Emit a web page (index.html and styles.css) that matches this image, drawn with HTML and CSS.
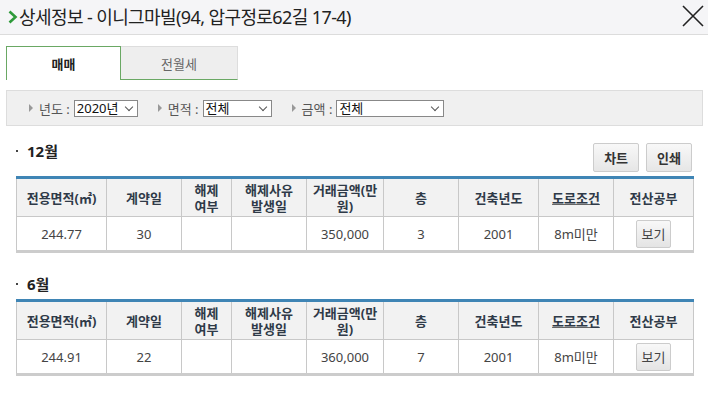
FILE: index.html
```html
<!DOCTYPE html>
<html>
<head>
    <title>상세정보</title>
    <link rel="stylesheet" href="styles.css">
</head>
<body>
    <div class="header">
        <h1 class="title">
            <svg class="chev" width="10" height="14" viewBox="0 0 10 14"><path d="M1.5 1.5 L7.5 7 L1.5 12.5" fill="none" stroke="#2e9a3a" stroke-width="2.6"/></svg>상세정보 - 이니그마빌(94, 압구정로62길 17-4)
        </h1>
        <svg class="close" width="24" height="24" viewBox="0 0 24 24"><path d="M2 2 L22 22 M22 2 L2 22" stroke="#222" stroke-width="1.6"/></svg>
    </div>

    <div class="content">
        <div class="tabs">
            <div class="tab active">매매</div>
            <div class="tab">전월세</div>
        </div>

        <div class="filter">
            <span class="flabel">년도 :</span>
            <span class="select w-year">2020년<i class="caret"></i></span>
            <span class="flabel">면적 :</span>
            <span class="select w-area">전체<i class="caret"></i></span>
            <span class="flabel">금액 :</span>
            <span class="select w-price">전체<i class="caret"></i></span>
        </div>

        <div class="section">
            <div class="section-head">
                <h2 class="month">12월</h2>
                <div class="tools">
                    <button class="btn">차트</button>
                    <button class="btn">인쇄</button>
                </div>
            </div>
            <table class="deal">
                <colgroup>
                    <col style="width:90px"><col style="width:75px"><col style="width:50px"><col style="width:75px"><col style="width:77px"><col style="width:75px"><col style="width:80px"><col style="width:75px"><col style="width:80px">
                </colgroup>
                <tr>
                    <th>전용면적(㎡)</th><th>계약일</th><th><span class="ln">해제</span><span class="ln">여부</span></th><th><span class="ln">해제사유</span><span class="ln">발생일</span></th><th><span class="ln">거래금액(만</span><span class="ln">원)</span></th><th>층</th><th>건축년도</th><th><u>도로조건</u></th><th>전산공부</th>
                </tr>
                <tr>
                    <td>244.77</td><td>30</td><td></td><td></td><td>350,000</td><td>3</td><td>2001</td><td>8m미만</td><td><button class="view">보기</button></td>
                </tr>
            </table>
        </div>

        <div class="section">
            <div class="section-head short">
                <h2 class="month">6월</h2>
            </div>
            <table class="deal">
                <colgroup>
                    <col style="width:90px"><col style="width:75px"><col style="width:50px"><col style="width:75px"><col style="width:77px"><col style="width:75px"><col style="width:80px"><col style="width:75px"><col style="width:80px">
                </colgroup>
                <tr>
                    <th>전용면적(㎡)</th><th>계약일</th><th><span class="ln">해제</span><span class="ln">여부</span></th><th><span class="ln">해제사유</span><span class="ln">발생일</span></th><th><span class="ln">거래금액(만</span><span class="ln">원)</span></th><th>층</th><th>건축년도</th><th><u>도로조건</u></th><th>전산공부</th>
                </tr>
                <tr>
                    <td>244.91</td><td>22</td><td></td><td></td><td>360,000</td><td>7</td><td>2001</td><td>8m미만</td><td><button class="view">보기</button></td>
                </tr>
            </table>
        </div>
    </div>
</body>
</html>
```

FILE: styles.css
```css
body {
    margin: 0;
    font-family: "Noto Sans", "Noto Sans CJK KR", sans-serif;
    color: #333;
    background: #fff;
}

.header {
    height: 34px;
    background: #f5f5f7;
    border-bottom: 1px solid #dcdcdc;
    display: flex;
    align-items: center;
    justify-content: space-between;
    padding: 0 3px 0 8px;
}

.title {
    margin: 0;
    font-size: 18px;
    font-weight: normal;
    color: #222;
    display: flex;
    align-items: center;
    line-height: 1;
    letter-spacing: -0.6px;
}

.chev {
    margin-right: 1px;
}

.close {
    margin-top: -2px;
}

.content {
    padding: 11px 5px 0 6px;
}

.tabs {
    display: flex;
    height: 34px;
}

.tab {
    box-sizing: border-box;
    width: 117px;
    display: flex;
    align-items: center;
    justify-content: center;
    font-size: 13px;
    color: #666;
    background: #eee;
    border-top: 1px solid #ddd;
    border-right: 1px solid #ddd;
    border-bottom: 1px solid #6aa864;
}

.tab.active {
    width: 115px;
    background: #fff;
    color: #222;
    font-weight: bold;
    border: 1px solid #6aa864;
    border-bottom: none;
}

.filter {
    margin-top: 10px;
    height: 36px;
    box-sizing: border-box;
    background: #f0f0f0;
    border: 1px solid #ddd;
    display: flex;
    align-items: center;
    padding-left: 20px;
    font-size: 13px;
    color: #555;
}

.flabel {
    position: relative;
    padding-left: 12px;
    margin-right: 4px;
}

.flabel::before {
    content: "";
    position: absolute;
    left: 2px;
    top: 5px;
    border-left: 4px solid #999;
    border-top: 4px solid transparent;
    border-bottom: 4px solid transparent;
}

.select {
    box-sizing: border-box;
    height: 17px;
    border: 1px solid #888;
    background: #fff;
    color: #111;
    font-size: 13px;
    line-height: 15px;
    padding-left: 2px;
    position: relative;
    margin-right: 18px;
}

.caret {
    position: absolute;
    right: 5px;
    top: 3px;
    width: 5px;
    height: 5px;
    border-right: 1px solid #555;
    border-bottom: 1px solid #555;
    transform: rotate(45deg);
}

.w-year { width: 64px; }
.w-area { width: 69px; }
.w-price { width: 108px; }

.section {
    margin-top: 16px;
}

.section + .section {
    margin-top: 22px;
}

.section-head {
    display: flex;
    align-items: center;
    justify-content: space-between;
    height: 30px;
    margin-bottom: 4px;
    margin-right: 11px;
}

.section-head.short {
    height: 20px;
    margin-bottom: 4px;
}

.month {
    margin: 0;
    font-size: 15px;
    font-weight: bold;
    color: #222;
    position: relative;
    padding-left: 21px;
    align-self: flex-start;
    line-height: 18px;
}

.month::before {
    content: "";
    position: absolute;
    left: 10px;
    top: 8px;
    width: 2px;
    height: 2px;
    background: #444;
}

.tools {
    display: flex;
    gap: 7px;
}

.btn {
    height: 29px;
    padding: 0 10px;
    font-family: inherit;
    font-size: 13px;
    font-weight: bold;
    color: #333;
    background: linear-gradient(#f8f8f8, #e6e6e6);
    border: 1px solid #ccc;
    border-radius: 2px;
}

.deal {
    margin-left: 10px;
    width: 678px;
    border-collapse: collapse;
    table-layout: fixed;
    border-top: 3px solid #3f85b5;
    border-bottom: 3px solid #ccc;
    font-size: 13px;
}

.deal th,
.deal td {
    border: 1px solid #c8c8c8;
    text-align: center;
    padding: 0;
}

.deal th {
    height: 37px;
    background: #f2f2f2;
    color: #2f3a48;
    font-weight: bold;
    line-height: 16px;
}

.ln {
    display: block;
    height: 16px;
    line-height: 16px;
    overflow: hidden;
}

.deal td {
    height: 33px;
    color: #444;
}

.deal u {
    text-decoration-color: #666;
}

.view {
    height: 28px;
    width: 35px;
    padding: 0;
    font-family: inherit;
    font-size: 13px;
    color: #444;
    background: linear-gradient(#f8f8f8, #e4e4e4);
    border: 1px solid #ccc;
    border-radius: 2px;
}
```
